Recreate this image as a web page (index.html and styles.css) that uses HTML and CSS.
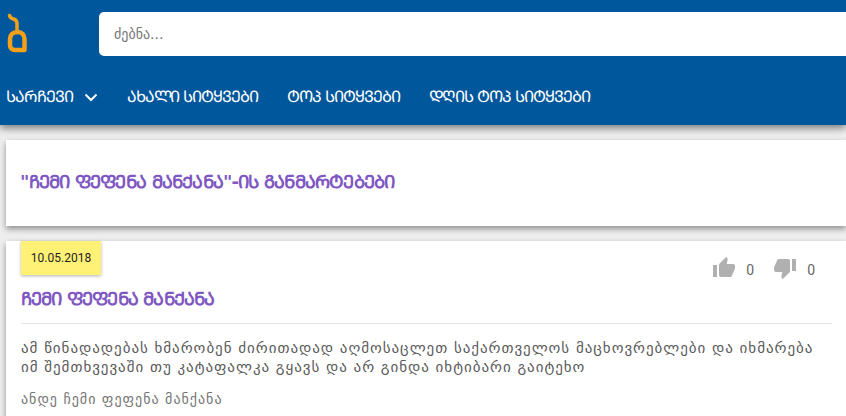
FILE: index.html
```html
<!doctype html>
<html lang="ka">
  <head>
    <meta charset="UTF-8" />
    <title>ჩემი ფეფენა მანქანა</title>
    <link rel="stylesheet" href="styles.css">
  </head>
  <body>
    <header class="main-header">
      <div class="top-row">
        <svg class="logo" width="30" height="42" viewBox="0 0 30 42">
          <path d="M5.500 3.500c.5 2 2 3 4 3.500 2.500.6 3.500 2 3.500 4.500v6" fill="none" stroke="#f5a01a" stroke-width="3.500" stroke-linecap="round" />
          <path d="M13.500 20c4.500 0 7 3 7 7v11h-9.500c-3 0-5-2-5-5v-6c0-4 3-7 7.500-7z" fill="none" stroke="#f5a01a" stroke-width="4.500" stroke-linejoin="round" />
        </svg>
        <div class="search-bar">
          <input type="text" placeholder="ძებნა..." />
        </div>
      </div>
      <nav class="nav">
        <a class="nav-item">
          ᲡᲐᲠᲩᲔᲕᲘ
          <svg width="14" height="9" viewBox="0 0 14 9"><path d="M1.500 1.500L7 7l5.500-5.500" fill="none" stroke="#fff" stroke-width="2" /></svg>
        </a>
        <a class="nav-item">ᲐᲮᲐᲚᲘ ᲡᲘᲢᲧᲕᲔᲑᲘ</a>
        <a class="nav-item">ᲢᲝᲞ ᲡᲘᲢᲧᲕᲔᲑᲘ</a>
        <a class="nav-item">ᲓᲦᲘᲡ ᲢᲝᲞ ᲡᲘᲢᲧᲕᲔᲑᲘ</a>
      </nav>
    </header>

    <section class="card title-card">
      <h1 class="page-title">"ᲩᲔᲛᲘ ᲤᲔᲤᲔᲜᲐ ᲛᲐᲜᲥᲐᲜᲐ"-ᲘᲡ ᲒᲐᲜᲛᲐᲠᲢᲔᲑᲔᲑᲘ</h1>
    </section>

    <section class="card word-card">
      <div class="word-top">
        <span class="date">10.05.2018</span>
        <div class="votes">
          <svg width="24" height="24" viewBox="0 0 24 24"><path d="M1 21h4V9H1v12zm22-11c0-1.100-.9-2-2-2h-6.300l.95-4.570.03-.32c0-.41-.17-.79-.44-1.060L14.170 1 7.590 7.590C7.220 7.950 7 8.450 7 9v10c0 1.100.9 2 2 2h9c.83 0 1.540-.5 1.840-1.220l3.020-7.050c.09-.23.14-.47.14-.73v-2z" /></svg>
          <span class="count">0</span>
          <svg width="24" height="24" viewBox="0 0 24 24"><path d="M15 3H6c-.83 0-1.540.5-1.840 1.220l-3.020 7.050c-.09.23-.14.47-.14.73v2c0 1.100.9 2 2 2h6.310l-.95 4.570-.03.32c0 .41.17.79.44 1.060L9.830 23l6.590-6.590c.36-.36.58-.86.58-1.410V5c0-1.100-.9-2-2-2zm4 0v12h4V3h-4z" /></svg>
          <span class="count">0</span>
        </div>
      </div>
      <h2 class="word-title">ᲩᲔᲛᲘ ᲤᲔᲤᲔᲜᲐ ᲛᲐᲜᲥᲐᲜᲐ</h2>
      <p class="word-body">ამ წინადადებას ხმარობენ ძირითადად აღმოსაცლეთ საქართველოს მაცხოვრებლები და იხმარება იმ შემთხვევაში თუ კატაფალკა გყავს და არ გინდა იხტიბარი გაიტეხო</p>
      <p class="word-example">ანდე ჩემი ფეფენა მანქანა</p>
    </section>
  </body>
</html>
```

FILE: styles.css
```css
body {
  font-family: 'DejaVu Sans', 'Noto Sans', sans-serif;
  background-color: #eeeeee;
  margin: 0;
  padding: 0;
  height: 416px;
  overflow: hidden;
}

/* Main Header */
.main-header {
  background-color: #01579b;
  height: 125px;
  box-shadow: 0 3px 8px rgba(0, 0, 0, 0.5);
}

.top-row {
  display: flex;
  align-items: flex-start;
  padding-top: 12px;
  padding-left: 4px;
}

.logo {
  flex: none;
  margin-right: 65px;
}

.search-bar {
  flex: 1;
}

.search-bar input {
  display: block;
  box-sizing: border-box;
  width: 100%;
  height: 44px;
  border: none;
  border-radius: 5px 0 0 5px;
  padding: 0 15px;
  font-family: inherit;
  font-size: 14px;
  background-color: #fff;
}

.search-bar input::placeholder {
  color: #757575;
}

.nav {
  display: flex;
  gap: 29px;
  padding: 29px 0 0 6px;
}

.nav-item {
  display: flex;
  align-items: center;
  gap: 11px;
  color: #fff;
  font-size: 16px;
  line-height: 24px;
  letter-spacing: -1.05px;
  white-space: nowrap;
}

/* Cards */
.card {
  background-color: #fff;
  margin-left: 6px;
  box-shadow: 0 3px 6px rgba(0, 0, 0, 0.4);
}

.title-card {
  display: flex;
  align-items: center;
  height: 86px;
  margin-top: 15px;
  padding-left: 14px;
  padding-bottom: 4px;
  box-sizing: border-box;
}

.page-title {
  margin: 0;
  font-size: 18px;
  font-weight: 700;
  letter-spacing: -0.8px;
  color: #7e57c2;
}

.word-card {
  margin-top: 15px;
  padding: 0 14px 9px 15px;
}

.word-top {
  display: flex;
  justify-content: space-between;
  align-items: flex-start;
}

.date {
  display: block;
  width: 80px;
  height: 34px;
  line-height: 34px;
  text-align: center;
  font-family: Roboto, sans-serif;
  font-size: 12px;
  color: #222;
  background-color: #fff176;
  box-shadow: 0 1px 3px rgba(0, 0, 0, 0.3);
}

.votes {
  display: flex;
  align-items: center;
  padding-top: 15px;
  padding-right: 17px;
  fill: #b0b0b0;
}

.count {
  font-family: Roboto, sans-serif;
  font-size: 14px;
  color: #666;
  margin: 4px 19px 0 10px;
}

.count:last-child {
  margin-right: 0;
}

.word-title {
  margin: 7px 0 0;
  font-size: 18px;
  line-height: 24px;
  font-weight: 700;
  letter-spacing: -0.85px;
  color: #7e57c2;
}

.word-body {
  margin: 12px 0 0;
  padding-top: 15px;
  border-top: 1px solid #e6e6e6;
  font-size: 15px;
  line-height: 19px;
  letter-spacing: 0.97px;
  color: #5a5a5a;
}

.word-example {
  margin: 13px 0 0;
  font-size: 14px;
  line-height: 18px;
  letter-spacing: 1px;
  color: #757575;
}
```
